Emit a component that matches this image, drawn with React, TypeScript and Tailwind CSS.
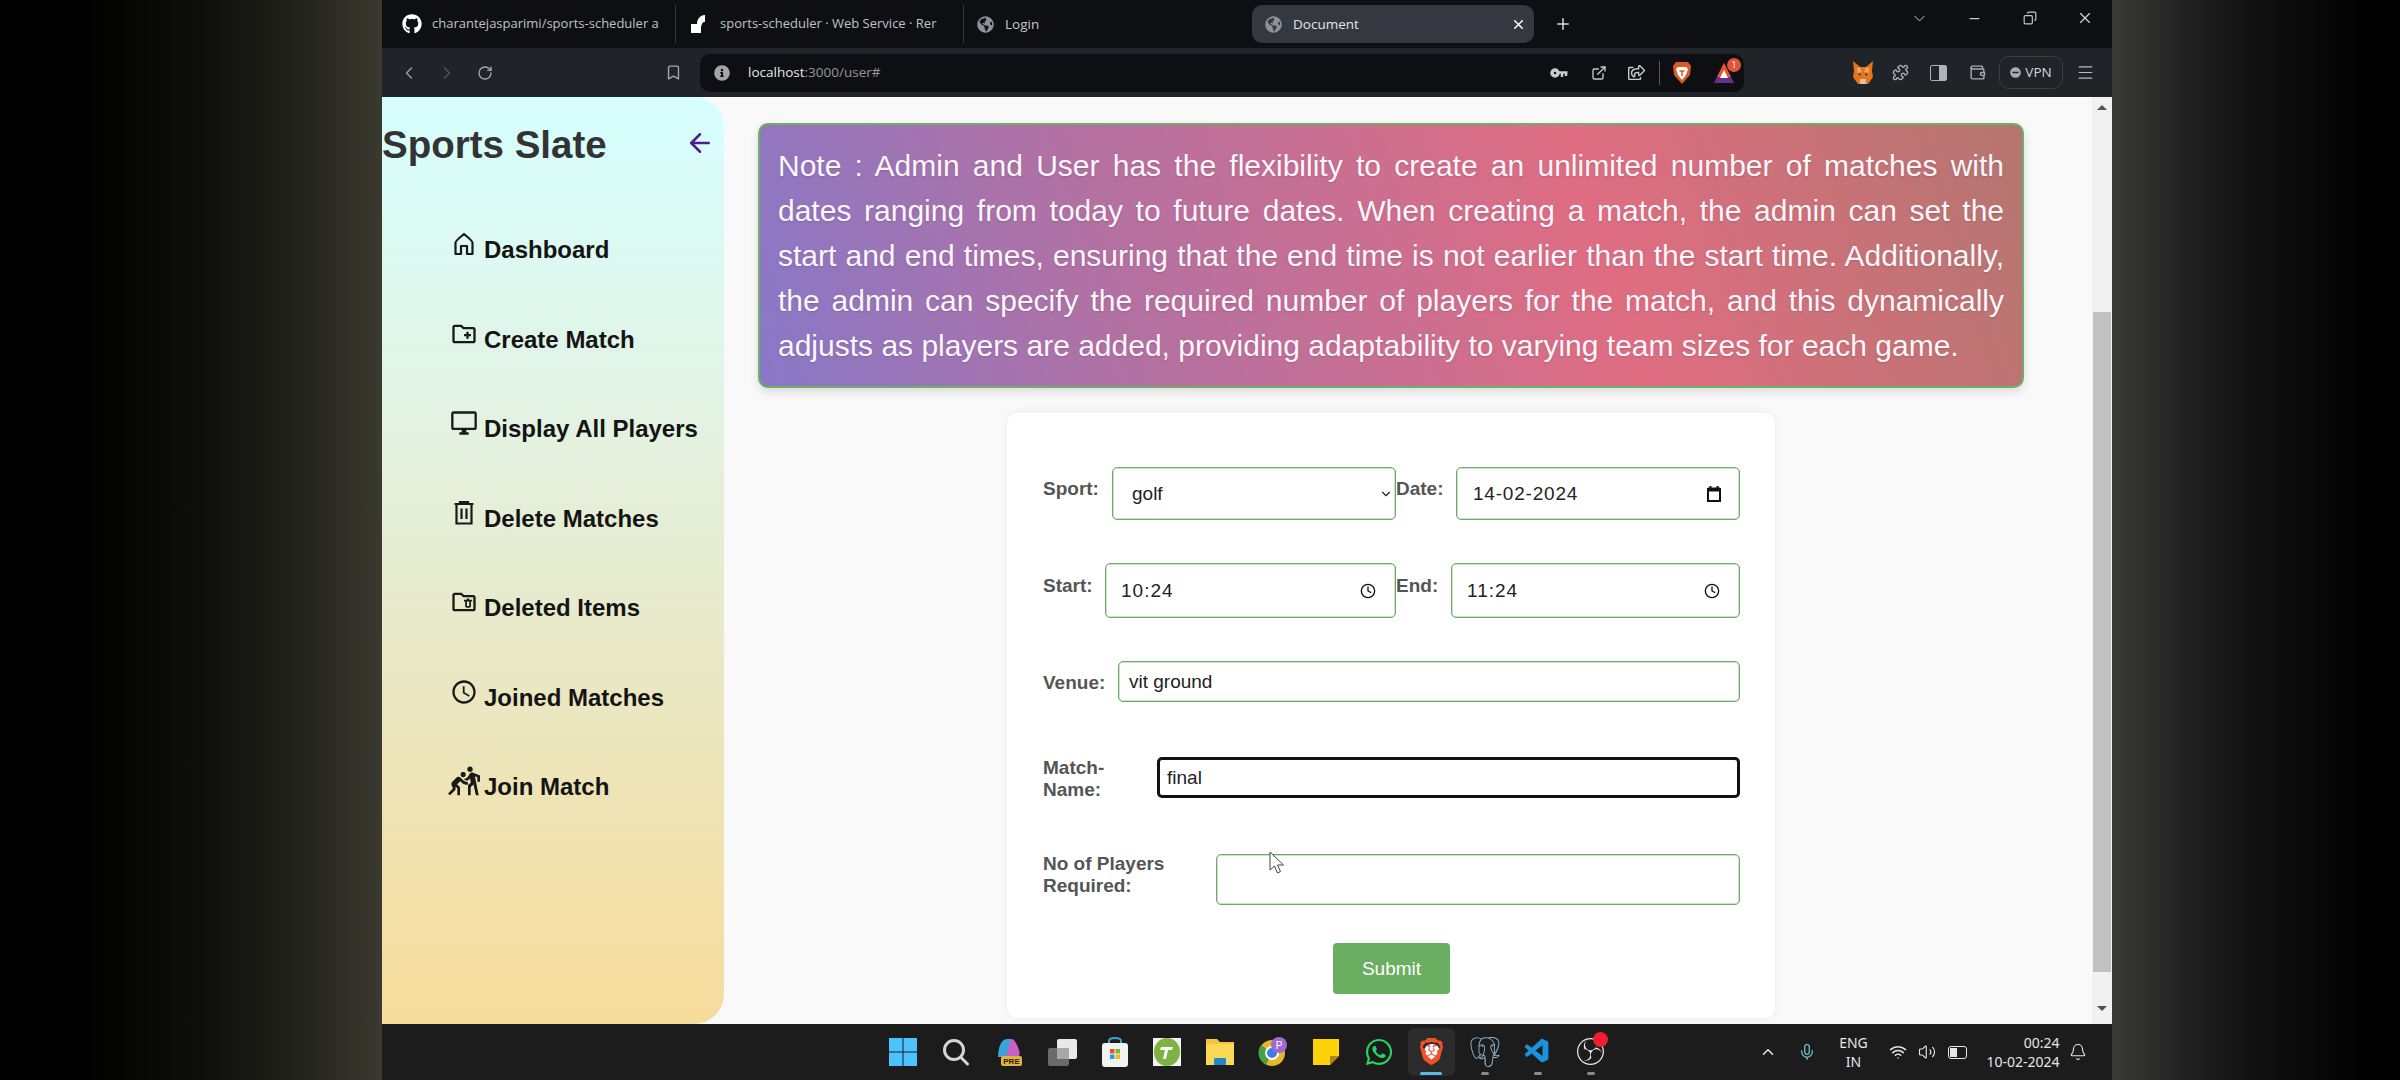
import type { ReactNode } from "react";
import {
  ArrowLeft,
  Bell,
  Bookmark,
  ChevronDown,
  ChevronLeft,
  ChevronRight,
  ChevronUp,
  Clock,
  Copy,
  ExternalLink,
  Menu,
  Mic,
  Minus,
  Plus,
  Puzzle,
  RotateCw,
  Volume2,
  Wallet,
  Wifi,
  X,
} from "lucide-react";
import { FaGithub, FaGlobeAmericas, FaInfoCircle, FaMinusCircle, FaRegShareSquare, FaWhatsapp } from "react-icons/fa";
import {
  MdOutlineAccessTime,
  MdOutlineCreateNewFolder,
  MdOutlineDesktopWindows,
  MdOutlineFolderDelete,
  MdOutlineSportsKabaddi,
} from "react-icons/md";
import { SiBrave, SiObsstudio, SiPostgresql } from "react-icons/si";
import { VscVscode } from "react-icons/vsc";

function HomeIcon() {
  return (
    <svg width="28" height="28" viewBox="0 0 28 28" fill="none" stroke="#1a1a1a" strokeWidth="2.2">
      <path d="M5.5 24V12.5C5.5 11 14 4 14 4s8.5 7 8.5 8.5V24h-5.5v-8h-6v8Z" strokeLinejoin="round" />
    </svg>
  );
}

function TrashIcon() {
  return (
    <svg width="28" height="28" viewBox="0 0 28 28" fill="none" stroke="#1a1a1a" strokeWidth="2.2">
      <path d="M4.5 5h19M10 5V3h8v2M6.5 5v19.5h15V5M11.5 9.5V20M16.5 9.5V20" />
    </svg>
  );
}

const navItems: { label: string; icon: ReactNode; shift?: string }[] = [
  { label: "Dashboard", icon: <HomeIcon /> },
  { label: "Create Match", icon: <MdOutlineCreateNewFolder size={28} color="#1a1a1a" /> },
  { label: "Display All Players", icon: <MdOutlineDesktopWindows size={28} color="#1a1a1a" /> },
  { label: "Delete Matches", icon: <TrashIcon /> },
  { label: "Deleted Items", icon: <MdOutlineFolderDelete size={28} color="#1a1a1a" /> },
  { label: "Joined Matches", icon: <MdOutlineAccessTime size={28} color="#1a1a1a" /> },
  { label: "Join Match", icon: <MdOutlineSportsKabaddi size={32} color="#1a1a1a" />, shift: "-ml-[2px] -mr-[2px] -mt-[4px]" },
];

function Sidebar() {
  return (
    <aside className="w-[342px] shrink-0 rounded-r-[30px] bg-[linear-gradient(180deg,#d6ffff_0%,#e3f2e2_35%,#e9e8c4_62%,#f7db9b_100%)] pt-[25px] font-['Liberation_Sans',sans-serif]">
      <div className="flex items-center justify-between pr-[9px]">
        <h1 className="text-[38.5px] leading-[46px] font-bold text-[#333] whitespace-nowrap">Sports Slate</h1>
        <ArrowLeft size={30} strokeWidth={2} color="#4b1f8f" className="-mt-[5px]" />
      </div>
      <nav className="mt-[65px] pl-[68px]">
        {navItems.map((item) => (
          <div key={item.label} className="flex h-[89.5px] items-start">
            <span className={item.shift ?? "-mt-[3px]"}>{item.icon}</span>
            <span className="ml-[6px] mt-[3px] text-[24px] leading-[28px] font-bold text-[#141414] whitespace-nowrap">
              {item.label}
            </span>
          </div>
        ))}
      </nav>
    </aside>
  );
}

function Box({ className, children }: { className: string; children?: ReactNode }) {
  return (
    <div className={`flex items-center rounded-[5px] border border-[#6fa96a] bg-white pt-[1px] text-[19px] text-[#222] shadow-[inset_0_0_0_1px_rgba(131,183,126,0.4)] ${className}`}>
      {children}
    </div>
  );
}

function Label({ className, children }: { className: string; children: ReactNode }) {
  return <label className={`shrink-0 text-[19px] leading-[22px] font-bold text-[#555] ${className}`}>{children}</label>;
}

function DateIcon() {
  return (
    <svg width="18" height="18" viewBox="0 0 18 18" fill="none" stroke="#111" strokeWidth="2">
      <path d="M3 4h12v12H3Z" />
      <path d="M3 4.5h12" strokeWidth="4" />
      <path d="M5.5 1v2M12.500 1v2" />
    </svg>
  );
}

function CreateForm() {
  return (
    <form className="relative mx-auto mt-[25px] w-[768px] rounded-[10px] bg-white pt-[54px] pr-[35px] pb-[24px] pl-[36px] shadow-[0_0_10px_rgba(0,0,0,0.06)]">
      <div className="flex h-[53px]">
        <Label className="mt-[11px] w-[69px]">Sport:</Label>
        <Box className="w-[284px] justify-between pr-[2px] pl-[19px]">
          <span>golf</span>
          <ChevronDown size={14} color="#222" />
        </Box>
        <Label className="mt-[11px] w-[60px]">Date:</Label>
        <Box className="w-[284px] justify-between pr-[16px] pl-[16px]">
          <span className="tracking-[0.8px]">14-02-2024</span>
          <DateIcon />
        </Box>
      </div>
      <div className="mt-[43px] flex h-[55px]">
        <Label className="mt-[12px] w-[62px]">Start:</Label>
        <Box className="w-[291px] justify-between pr-[19px] pl-[15px]">
          <span className="tracking-[1px]">10:24</span>
          <Clock size={16} color="#111" />
        </Box>
        <Label className="mt-[12px] w-[55px]">End:</Label>
        <Box className="w-[289px] justify-between pr-[19px] pl-[15px]">
          <span className="tracking-[1px]">11:24</span>
          <Clock size={16} color="#111" />
        </Box>
      </div>
      <div className="mt-[43px] flex h-[41px]">
        <Label className="mt-[11px] w-[75px]">Venue:</Label>
        <Box className="flex-1 pl-[10px]">vit ground</Box>
      </div>
      <div className="mt-[55px] flex h-[41px]">
        <Label className="w-[114px]">
          Match-
          <br />
          Name:
        </Label>
        <Box className="flex-1 border-[3px] border-[#111] pl-[7px] shadow-none">final</Box>
      </div>
      <div className="mt-[56px] flex h-[51px]">
        <Label className="-mt-[1px] w-[173px]">
          No of Players
          <br />
          Required:
        </Label>
        <Box className="flex-1" />
      </div>
      <div className="mt-[38px] flex justify-center">
        <button type="button" className="h-[51px] w-[117px] rounded-[4px] bg-[#6aae62] pt-[1px] text-[19px] text-white">
          Submit
        </button>
      </div>
      {/* mouse pointer sits over the last input */}
      <svg className="absolute top-[438px] left-[262px]" width="16" height="24" viewBox="0 0 16 24">
        <path d="M1 1v18l4.5-4 3 7 3-1.5-3-6.500h6Z" fill="#fff" stroke="#444" strokeWidth="1" />
      </svg>
    </form>
  );
}

function Page() {
  return (
    <div className="flex h-[927px] overflow-hidden bg-[#f9f9f9] font-['Liberation_Sans',sans-serif]">
      <Sidebar />
      <main className="flex-1 pt-[26px] pr-[68px] pl-[34px]">
        <div className="rounded-[10px] border-2 border-[#6fae69] bg-[linear-gradient(72deg,#8878c8_0%,#b271a3_28%,#df6d82_66%,#b5766f_100%)] px-[18px] pt-[17.5px] pb-[18.5px] text-justify text-[30px] leading-[45px] text-[#fdf6fb] shadow-[0_4px_10px_rgba(0,0,0,0.12)] [text-shadow:0_1px_2px_rgba(0,0,0,0.15)]">
          Note : Admin and User has the flexibility to create an unlimited number of matches with dates ranging from
          today to future dates. When creating a match, the admin can set the start and end times, ensuring that the
          end time is not earlier than the start time. Additionally, the admin can specify the required number of
          players for the match, and this dynamically adjusts as players are added, providing adaptability to varying
          team sizes for each game.
        </div>
        <CreateForm />
      </main>
      <div className="flex w-[20px] shrink-0 flex-col items-center bg-[#f1f1f1]">
        <span className="mt-[8px] h-0 w-0 border-x-[5px] border-b-[5px] border-x-transparent border-b-[#505050]" />
        <div className="mt-[202px] h-[660px] w-[18px] bg-[#c1c1c1]" />
        <span className="mt-[34px] h-0 w-0 border-x-[5px] border-t-[5px] border-x-transparent border-t-[#505050]" />
      </div>
    </div>
  );
}

function Tab({ icon, label, className }: { icon: ReactNode; label: string; className: string }) {
  return (
    <div className={`flex h-[38px] items-center border-r border-[#33363b] ${className}`}>
      <span className="flex w-[20px] shrink-0 justify-center">{icon}</span>
      <span className="ml-[10px] text-[13px] whitespace-nowrap text-[#c0c2c6]">{label}</span>
    </div>
  );
}

function RenderLogo() {
  return (
    <svg width="20" height="20" viewBox="0 0 20 20" fill="#fff">
      <path d="M1 19V10h6c0-4 2-8 7-9h1v7c-3 0-3 2-4 5v6Z" />
    </svg>
  );
}

function TabBar() {
  return (
    <div className="flex h-[48px] items-center bg-[#0d0f13] pl-[20px] font-['Open_Sans',sans-serif]">
      <Tab icon={<FaGithub size={20} color="#fff" />} label="charantejasparimi/sports-scheduler a" className="w-[274px]" />
      <Tab icon={<RenderLogo />} label="sports-scheduler · Web Service · Rer" className="w-[288px] pl-[14px]" />
      <div className="ml-[13px] flex w-[275px] items-center">
        <FaGlobeAmericas size={17} color="#8e9196" />
        <span className="ml-[11px] text-[13.5px] text-[#c6c8cc]">Login</span>
      </div>
      <div className="flex h-[38px] w-[282px] items-center rounded-[10px] bg-[#353840] pr-[8px] pl-[13px]">
        <FaGlobeAmericas size={17} color="#8e9196" />
        <span className="ml-[11px] flex-1 text-[13.5px] text-[#e4e5e8]">Document</span>
        <X size={15} color="#fff" strokeWidth={2.4} />
      </div>
      <Plus size={18} color="#d8d9dc" className="ml-[20px]" />
      <ChevronDown size={19} color="#c8c9cc" strokeWidth={1.25} className="ml-[338px] -mt-[12px]" />
      <Minus size={15} color="#c8c9cc" className="ml-[38px] -mt-[12px]" />
      <Copy size={14} color="#c8c9cc" className="ml-[41px] -mt-[12px] -scale-x-100" />
      <X size={18} color="#d8d9dc" strokeWidth={1.5} className="ml-[39px] -mt-[12px]" />
    </div>
  );
}

function KeyIcon() {
  return (
    <svg width="18" height="12" viewBox="0 0 18 12" fill="none" stroke="#c9cacc">
      <circle cx="5" cy="6" r="3" strokeWidth="3.5" />
      <path d="M8 5.500h9.500M12 5.500V10M16 5.500V9" strokeWidth="2.500" />
    </svg>
  );
}

function MetaMaskFox() {
  return (
    <svg width="22" height="26" viewBox="0 0 22 26">
      <path d="M1 1l7 6h6l7-6-1 10 1 6-5 7H6l-5-7 1-6Z" fill="#e2761b" />
      <path d="M5 8l3-1 2 5-5 1ZM17 8l-3-1-2 5 5 1Z" fill="#f0a35e" />
      <path d="M6 13l3 1-1 2ZM16 13l-3 1 1 2Z" fill="#233447" />
      <path d="M8 19h6v5H8Z" fill="#d7c1b3" />
    </svg>
  );
}

function BraveToolbarIcon() {
  return (
    <svg width="20" height="24" viewBox="0 0 20 24">
      <path d="M4 1h12l3 4-1 9-8 9-8-9-1-9Z" fill="#dc5a25" />
      <path d="M6 6h8l2 2-2 6-4 5-4-5-2-6Z" fill="#fff" />
      <path d="M7.500 10h5M10 10v5" stroke="#dc5a25" strokeWidth="1.5" />
    </svg>
  );
}

function Toolbar() {
  return (
    <div className="flex h-[49px] items-center bg-[#202327] pl-[17px] font-['Open_Sans',sans-serif]">
      <ChevronLeft size={20} color="#a3a5a9" strokeWidth={1.5} />
      <ChevronRight size={20} color="#55585c" strokeWidth={1.5} className="ml-[18px]" />
      <RotateCw size={16} color="#a3a5a9" className="ml-[20px]" />
      <Bookmark size={17} color="#a3a5a9" className="ml-[172px]" />
      <div className="ml-[18px] flex h-[38px] w-[1044px] items-center rounded-[10px] bg-[#0d0f13] pr-[9px] pl-[14px]">
        <FaInfoCircle size={16} color="#a3a5a9" />
        <span className="ml-[18px] flex-1 text-[13.5px] text-[#e8e9eb]">
          localhost<span className="text-[#96989c]">:3000/user#</span>
        </span>
        <KeyIcon />
        <ExternalLink size={16} color="#c9cacc" className="ml-[23px]" />
        <FaRegShareSquare size={17} color="#c9cacc" className="ml-[21px]" />
        <span className="ml-[14px] h-[24px] w-px bg-[#54575b]" />
        <span className="ml-[12px]"><BraveToolbarIcon /></span>
        <div className="relative ml-[21px] flex">
          <svg width="22" height="24" viewBox="0 0 22 24">
            <path d="M11 2 21 22H1Z" fill="#6b2e8f" />
            <path d="M11 2 18 16H4Z" fill="#e8552c" />
            <path d="M11 9l4 8H7Z" fill="#fff" />
          </svg>
          <span className="absolute -top-[3px] -right-[6px] flex h-[14px] w-[14px] items-center justify-center rounded-full bg-[#e0533a] text-[9px] text-white">
            1
          </span>
        </div>
      </div>
      <span className="ml-[108px]"><MetaMaskFox /></span>
      <Puzzle size={17} color="#a9abaf" className="ml-[18px]" />
      <span className="ml-[21px] flex h-[16px] w-[17px] justify-end rounded-[2px] border border-[#b0b2b6]"><span className="h-full w-[7px] bg-[#b0b2b6]" /></span>
      <Wallet size={17} color="#a9abaf" className="ml-[22px]" />
      <div className="ml-[13px] flex h-[33px] w-[64px] items-center justify-center gap-[4px] rounded-[10px] border border-[#3b3e43] text-[13.5px] text-[#d5d6d8]">
        <FaMinusCircle size={11} color="#a9abaf" />
        VPN
      </div>
      <Menu size={19} color="#b8babd" strokeWidth={1.5} className="ml-[13px]" />
    </div>
  );
}

function TaskIcon({ children, active, dot }: { children: ReactNode; active?: boolean; dot?: boolean }) {
  return (
    <div className="relative flex h-[48px] w-[52.9px] shrink-0 items-center justify-center">
      {active && <span className="absolute inset-y-0 left-[3px] w-[47px] rounded-[6px] bg-[#2b2b2b]" />}
      <span className="relative -mt-[1px] flex">{children}</span>
      {active && <span className="absolute bottom-[1px] left-[15px] h-[3px] w-[22px] rounded-full bg-[#5cb8e6]" />}
      {dot && <span className="absolute bottom-[1px] left-[22.5px] h-[3px] w-[8px] rounded-full bg-[#8a8a8a]" />}
    </div>
  );
}

function Taskbar() {
  return (
    <div className="flex h-[56px] items-center bg-[#1c1c1c] pl-[494.5px] font-['Noto_Sans',sans-serif]">
      <TaskIcon>
        <svg width="28" height="28" viewBox="0 0 28 28" fill="#4cc2ff">
          <path d="M0 0h13.5v13.5H0ZM14.500 0H28v13.5H14.500ZM0 14.500h13.5V28H0ZM14.500 14.500H28V28H14.500Z" />
        </svg>
      </TaskIcon>
      <TaskIcon>
        <svg width="28" height="28" viewBox="0 0 28 28" fill="none" stroke="#d6d6d6" strokeWidth="3">
          <circle cx="12" cy="12" r="9.5" />
          <path d="M18.5 19l7 7" strokeLinecap="round" />
        </svg>
      </TaskIcon>
      <TaskIcon>
        <svg width="28" height="28" viewBox="0 0 28 28">
          <path d="M3 19C3 10 6 1 12 1h5l-5 18Z" fill="#3aa3d8" />
          <path d="M11 19l5-18c3 0 5 3 8 11 1 3 1 6-1 7Z" fill="#c860c8" />
          <rect x="6" y="18" width="21" height="10" rx="2" fill="#e8b23a" />
          <text x="16.5" y="26" textAnchor="middle" fontSize="8" fontWeight="700" fill="#222" fontFamily="Liberation Sans">PRE</text>
        </svg>
      </TaskIcon>
      <TaskIcon>
        <svg width="30" height="28" viewBox="0 0 30 28">
          <rect x="10" y="1" width="20" height="20" rx="2" fill="#e8e8e8" />
          <rect x="1" y="10" width="21" height="18" rx="2" fill="#6a6a6a" />
          <rect x="10" y="10" width="12" height="11" fill="#a8a8a8" />
        </svg>
      </TaskIcon>
      <TaskIcon>
        <svg width="28" height="30" viewBox="0 0 28 30">
          <path d="M8 7V4c0-4 12-4 12 0v3" fill="none" stroke="#35a6d8" strokeWidth="2" />
          <rect x="1" y="6" width="26" height="24" rx="3" fill="#f2f2f2" />
          <path d="M9 12h4.500v4.500H9Z" fill="#e8532a" />
          <path d="M14.500 12H19v4.500h-4.500Z" fill="#7ab929" />
          <path d="M9 17.5h4.500V22H9Z" fill="#1fa3e8" />
          <path d="M14.500 17.5H19V22h-4.500Z" fill="#f5b919" />
        </svg>
      </TaskIcon>
      <TaskIcon>
        <svg width="28" height="28" viewBox="0 0 28 28">
          <rect width="28" height="28" fill="#f4f4f4" />
          <ellipse cx="14" cy="14" rx="13" ry="14" fill="#7cb342" />
          <path d="M8 9h12l-1 3h-4l-2 9h-3l2-9H7Z" fill="#fff" />
        </svg>
      </TaskIcon>
      <TaskIcon>
        <svg width="30" height="28" viewBox="0 0 30 28">
          <path d="M1 1h11l3 3h14v23H1Z" fill="#f5c542" />
          <path d="M1 6h28v21H1Z" fill="#fbd858" />
          <rect x="9" y="20" width="12" height="7" rx="1" fill="#2286c8" />
        </svg>
      </TaskIcon>
      <TaskIcon>
        <svg width="30" height="30" viewBox="0 0 30 30">
          <circle cx="14" cy="16" r="13" fill="#e2b92c" />
          <path d="M14 16 3 8A13 13 0 0 0 8 27.5Z" fill="#46a044" />
          <circle cx="14" cy="16" r="6" fill="#3d7fe0" stroke="#fff" strokeWidth="2" />
          <circle cx="21" cy="8" r="8" fill="#9c6ad0" />
          <text x="21" y="11.5" textAnchor="middle" fontSize="10" fill="#fff" fontFamily="Liberation Sans">P</text>
        </svg>
      </TaskIcon>
      <TaskIcon>
        <svg width="26" height="26" viewBox="0 0 26 26">
          <path d="M0 0h26v17l-9 9H0Z" fill="#fdd209" />
          <path d="M17 26v-9h9Z" fill="#333" />
          <path d="M17 17h9l-9 9Z" fill="#e8a80c" opacity="0.7" />
        </svg>
      </TaskIcon>
      <TaskIcon><FaWhatsapp size={30} color="#25d366" /></TaskIcon>
      <TaskIcon active>
        <span className="relative flex">
          <span className="absolute top-[6px] left-[6px] h-[18px] w-[16px] rounded-full bg-white" />
          <SiBrave size={27} color="#f1502a" className="relative" />
        </span>
      </TaskIcon>
      <TaskIcon dot><SiPostgresql size={30} color="#8fb5d8" /></TaskIcon>
      <TaskIcon dot><VscVscode size={29} color="#1b92dc" /></TaskIcon>
      <TaskIcon dot>
        <span className="relative flex">
          <SiObsstudio size={27} color="#e8e8e8" />
          <span className="absolute -top-[6px] -right-[4px] h-[15px] w-[15px] rounded-full bg-[#f01f2d]" />
        </span>
      </TaskIcon>
      <div className="ml-[132.5px] flex items-center text-[#e6e6e6]">
        <span className="flex w-[38px] justify-center"><ChevronUp size={18} /></span>
        <span className="flex w-[40px] justify-center"><Mic size={18} color="#7fd0ea" strokeWidth={1.5} /></span>
        <span className="w-[52px] text-center text-[14px] leading-[19px]">
          ENG
          <br />
          IN
        </span>
        <span className="flex w-[38px] justify-center"><Wifi size={18} /></span>
        <span className="flex w-[20px] justify-center"><Volume2 size={18} strokeWidth={1.5} /></span>
        <span className="flex w-[40px] justify-center">
          <span className="flex h-[13px] w-[19px] rounded-[3px] border border-[#e6e6e6] p-[1px]"><span className="h-full w-[7px] bg-[#e6e6e6]" /></span>
        </span>
        <span className="w-[82px] text-right text-[14px] leading-[19px] whitespace-nowrap">
          00:24
          <br />
          10-02-2024
        </span>
        <span className="flex w-[38px] justify-center"><Bell size={18} strokeWidth={1.5} /></span>
      </div>
    </div>
  );
}

export default function App() {
  return (
    <div className="flex h-[1080px] w-[2400px] overflow-hidden bg-black">
      <div className="w-[382px] shrink-0 bg-[linear-gradient(90deg,#000_20%,#0f0f0c_55%,#24241e_80%,#3a3a30_100%)]" />
      <div className="flex w-[1730px] shrink-0 flex-col">
        <TabBar />
        <Toolbar />
        <Page />
        <Taskbar />
      </div>
      <div className="flex-1 bg-[linear-gradient(90deg,#3a3a38_0%,#222_25%,#111_50%,#000_90%)]" />
    </div>
  );
}
